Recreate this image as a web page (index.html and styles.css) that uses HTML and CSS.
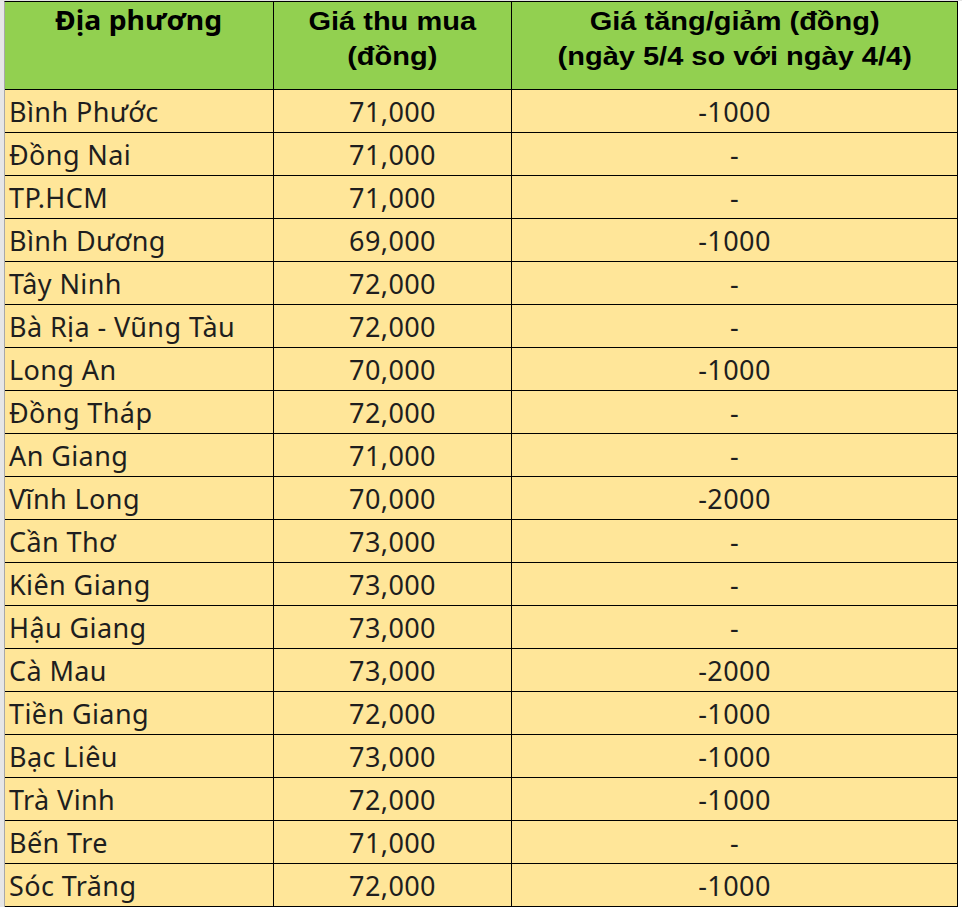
FILE: index.html
```html
<!DOCTYPE html>
<html lang="vi">
<head>
<meta charset="utf-8">
<title>Giá thu mua</title>
<link rel="stylesheet" href="styles.css">
</head>
<body>
<div class="sheet">
  <div class="gutter"></div>
  <table class="prices">
    <thead>
      <tr>
        <th class="c-place"><span class="wide wide-sm">Địa phương</span></th>
        <th class="c-price"><span class="wide">Giá thu mua<br>(đồng)</span></th>
        <th class="c-diff"><span class="wide">Giá tăng/giảm (đồng)<br>(ngày 5/4 so với ngày 4/4)</span></th>
      </tr>
    </thead>
    <tbody>
      <tr><td class="place">Bình Phước</td><td class="num">71,000</td><td class="num">-1000</td></tr>
      <tr><td class="place">Đồng Nai</td><td class="num">71,000</td><td class="num">-</td></tr>
      <tr><td class="place">TP.HCM</td><td class="num">71,000</td><td class="num">-</td></tr>
      <tr><td class="place">Bình Dương</td><td class="num">69,000</td><td class="num">-1000</td></tr>
      <tr><td class="place">Tây Ninh</td><td class="num">72,000</td><td class="num">-</td></tr>
      <tr><td class="place">Bà Rịa - Vũng Tàu</td><td class="num">72,000</td><td class="num">-</td></tr>
      <tr><td class="place">Long An</td><td class="num">70,000</td><td class="num">-1000</td></tr>
      <tr><td class="place">Đồng Tháp</td><td class="num">72,000</td><td class="num">-</td></tr>
      <tr><td class="place">An Giang</td><td class="num">71,000</td><td class="num">-</td></tr>
      <tr><td class="place">Vĩnh Long</td><td class="num">70,000</td><td class="num">-2000</td></tr>
      <tr><td class="place">Cần Thơ</td><td class="num">73,000</td><td class="num">-</td></tr>
      <tr><td class="place">Kiên Giang</td><td class="num">73,000</td><td class="num">-</td></tr>
      <tr><td class="place">Hậu Giang</td><td class="num">73,000</td><td class="num">-</td></tr>
      <tr><td class="place">Cà Mau</td><td class="num">73,000</td><td class="num">-2000</td></tr>
      <tr><td class="place">Tiền Giang</td><td class="num">72,000</td><td class="num">-1000</td></tr>
      <tr><td class="place">Bạc Liêu</td><td class="num">73,000</td><td class="num">-1000</td></tr>
      <tr><td class="place">Trà Vinh</td><td class="num">72,000</td><td class="num">-1000</td></tr>
      <tr><td class="place">Bến Tre</td><td class="num">71,000</td><td class="num">-</td></tr>
      <tr><td class="place">Sóc Trăng</td><td class="num">72,000</td><td class="num">-1000</td></tr>
    </tbody>
  </table>
</div>
</body>
</html>
```
FILE: styles.css
```css
html, body {
  margin: 0;
  padding: 0;
  background: #ffffff;
}

.sheet {
  display: flex;
  align-items: flex-start;
  border-top: 1px solid #e3e3e3;
}

.gutter {
  width: 4px;
  height: 906px;
  background: #e6e6e6;
  flex: none;
}

.prices {
  border-collapse: separate;
  border-spacing: 0;
  table-layout: fixed;
  width: 954px;
  border-left: 1px solid #a8a8a8;
  border-top: 1px solid #000;
  flex: none;
}

.prices th,
.prices td {
  box-sizing: border-box;
  border-right: 1px solid #000;
  border-bottom: 1px solid #000;
  padding: 0;
  overflow: hidden;
  white-space: nowrap;
}

.prices th {
  height: 88px;
  background: #92d050;
  color: #000;
  font-family: "Liberation Sans", Arial, sans-serif;
  font-weight: bold;
  font-size: 25px;
  line-height: 35px;
  text-align: center;
  vertical-align: top;
  padding-top: 2px;
}

.wide {
  display: inline-block;
  transform: scaleX(1.16);
}

.prices th.c-place {
  font-family: "Noto Sans", "Open Sans", sans-serif;
  font-size: 26px;
  padding-top: 1px;
}

.wide-sm {
  transform: scaleX(1.09);
}

.c-place { width: 269px; }
.c-price { width: 238px; }
.c-diff { width: 446px; }

.prices td {
  height: 43px;
  background: #ffe699;
  color: #1e1e1e;
  font-family: "Noto Sans", "Open Sans", sans-serif;
  font-size: 27px;
  letter-spacing: 0.4px;
  line-height: 30px;
  vertical-align: bottom;
  padding-bottom: 5px;
}

.prices td.place {
  text-align: left;
  padding-left: 4px;
}

.prices td.num {
  text-align: center;
}
```
